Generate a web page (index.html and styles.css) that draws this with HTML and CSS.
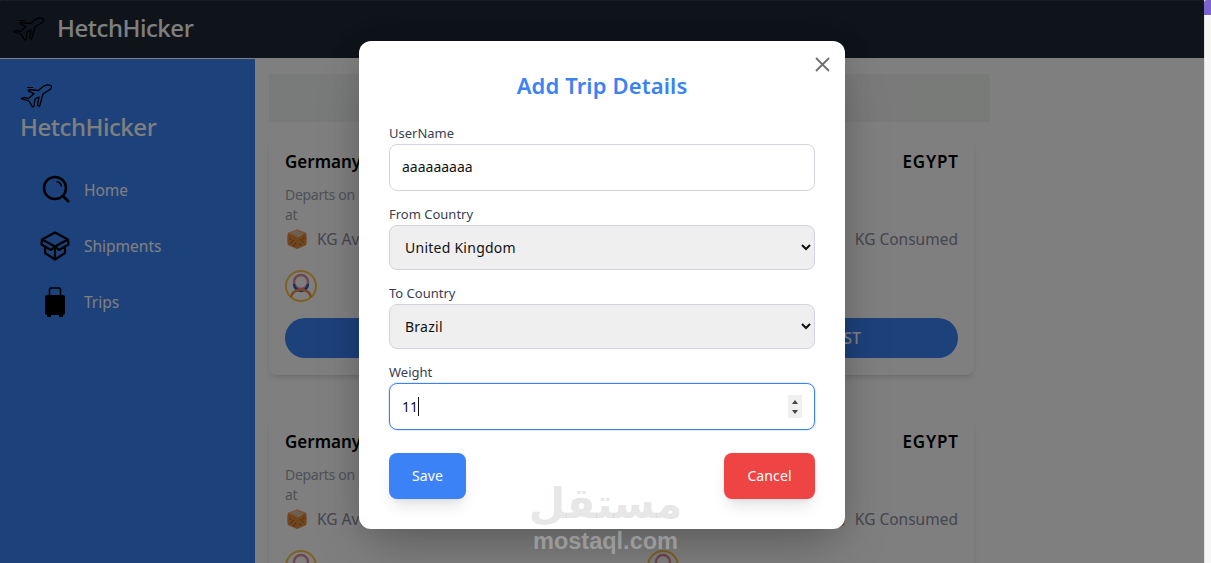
FILE: index.html
```html
<!DOCTYPE html>
<html lang="en">
<head>
    <meta charset="UTF-8">
    <meta name="viewport" content="width=device-width, initial-scale=1.0">
    <link rel="stylesheet" href="styles.css">
    <title>HetchHicker</title>
</head>
<body>
    <svg class="icon-defs" width="0" height="0">
        <defs>
            <symbol id="plane" viewBox="0 0 33 25">
                <path d="M31 2.500C28.500 1.500 25 2.300 22.500 4L18.500 7.500L9.500 6.500L8 7.700L14 10.800L8.500 15.500L4 14.500L1.500 15.700L9 18L12.500 23.800L14 23.500L15 16L19 14L17.500 22L19.500 23.500L23 11L30 6.500C31.500 5.300 32 3.300 31 2.500Z" fill="none" stroke="#000" stroke-width="1.300" stroke-linejoin="round"/>
                <path d="M7 4.500H13" fill="none" stroke="#000" stroke-width="1"/>
            </symbol>
            <symbol id="box" viewBox="0 0 24 24">
                <path d="M12 1.500L22 5.500C23 12 22.500 16 22 18.500L12 23L2 18.500C1.500 16 1 12 2 5.500Z" fill="#e08a3c"/>
                <path d="M12 1.500L22 5.500L12 10L2 5.500Z" fill="#f0b070"/>
                <path d="M9.500 2.500L17 6V8.500L12 10.500V8.500L5 4.500Z" fill="#d8c0a0"/>
                <path d="M4 12h1M7 14h1M5 16h1M10 17h1M8 19h1M15 18h1M18 15h1M16 13h1M19 11h1" stroke="#402010" stroke-width="1"/>
            </symbol>
            <symbol id="avatar" viewBox="0 0 32 32">
                <circle cx="16" cy="16" r="15" fill="#fff" stroke="#ffc040" stroke-width="2"/>
                <circle cx="16" cy="12" r="7" fill="none" stroke="#e08aa0" stroke-width="2.500"/>
                <path d="M9 14a7 7 0 0 0 14 0" fill="none" stroke="#3060c0" stroke-width="2.500"/>
                <path d="M6 27C7 22 11 20 16 19.500C21 20 25 22 26 27" fill="none" stroke="#f0904a" stroke-width="2.500"/>
            </symbol>
        </defs>
    </svg>

    <div class="page">
        <header class="topbar">
            <svg class="plane" width="33" height="25"><use href="#plane"/></svg>
            <span class="brand">HetchHicker</span>
        </header>

        <div class="layout">
            <aside class="sidebar">
                <svg class="plane" width="33" height="25"><use href="#plane"/></svg>
                <div class="brand">HetchHicker</div>
                <nav class="nav">
                    <a class="nav-item">
                        <svg class="nav-icon" viewBox="0 0 30 30">
                            <circle cx="15" cy="13" r="11" fill="none" stroke="#000" stroke-width="2.500"/>
                            <path d="M16.500 6.500A6 6 0 0 1 21.500 11.500" fill="none" stroke="#000" stroke-width="1.500"/>
                            <path d="M23.500 21.500L29 27" fill="none" stroke="#000" stroke-width="2.500"/>
                        </svg>
                        Home
                    </a>
                    <a class="nav-item">
                        <svg class="nav-icon" viewBox="0 0 30 30">
                            <path d="M15 1.500L28 8.500L15 15.500L2 8.500Z" fill="none" stroke="#000" stroke-width="2.200" stroke-linejoin="round"/>
                            <path d="M2 8.500L1.500 13.500L5 15.500V22L15 28.500L25 22V15.500L28.500 13.500L28 8.500M15 15.500V28.500M5 15.500L11 19L15 15.500L19 19L25 15.500" fill="none" stroke="#000" stroke-width="2.200" stroke-linejoin="round"/>
                        </svg>
                        Shipments
                    </a>
                    <a class="nav-item">
                        <svg class="nav-icon" viewBox="0 0 30 30">
                            <rect x="9.500" y="1" width="11" height="9" rx="1.500" fill="none" stroke="#000" stroke-width="1.500"/>
                            <rect x="5" y="8" width="20" height="20" rx="2" fill="#000"/>
                            <rect x="7" y="27" width="4" height="3" fill="#000"/>
                            <rect x="19" y="27" width="4" height="3" fill="#000"/>
                        </svg>
                        Trips
                    </a>
                </nav>
            </aside>

            <main class="content">
                <div class="hero"></div>

                <div class="card">
                    <div class="route">
                        <span>Germany</span>
                        <span class="route-to">EGYPT</span>
                    </div>
                    <p class="departs">Departs on 12 Feb 2024<br>at</p>
                    <div class="stats">
                        <div class="stat"><svg class="stat-icon"><use href="#box"/></svg>KG Available</div>
                        <div class="stat"><svg class="stat-icon"><use href="#box"/></svg>KG Price</div>
                        <div class="stat"><svg class="stat-icon"><use href="#box"/></svg>KG Total</div>
                        <div class="stat"><svg class="stat-icon"><use href="#box"/></svg>KG Consumed</div>
                    </div>
                    <div class="people">
                        <svg class="avatar"><use href="#avatar"/></svg>
                        <svg class="avatar"><use href="#avatar"/></svg>
                    </div>
                    <button class="request">SEND REQUEST</button>
                </div>

                <div class="card">
                    <div class="route">
                        <span>Germany</span>
                        <span class="route-to">EGYPT</span>
                    </div>
                    <p class="departs">Departs on 12 Feb 2024<br>at</p>
                    <div class="stats">
                        <div class="stat"><svg class="stat-icon"><use href="#box"/></svg>KG Available</div>
                        <div class="stat"><svg class="stat-icon"><use href="#box"/></svg>KG Price</div>
                        <div class="stat"><svg class="stat-icon"><use href="#box"/></svg>KG Total</div>
                        <div class="stat"><svg class="stat-icon"><use href="#box"/></svg>KG Consumed</div>
                    </div>
                    <div class="people">
                        <svg class="avatar"><use href="#avatar"/></svg>
                        <svg class="avatar"><use href="#avatar"/></svg>
                    </div>
                </div>
            </main>
        </div>

        <div class="overlay">
            <form class="modal">
                <button type="button" class="close-button" aria-label="Close">
                    <svg width="15" height="15" viewBox="0 0 15 15">
                        <path d="M1 1L14 14M14 1L1 14" stroke="#707070" stroke-width="1.800" fill="none"/>
                    </svg>
                </button>
                <h2 class="modal-title">Add Trip Details</h2>

                <label class="field-label" for="username">UserName</label>
                <input class="field field-text" id="username" type="text" value="aaaaaaaaa">

                <label class="field-label" for="from">From Country</label>
                <select class="field field-select" id="from">
                    <option>United Kingdom</option>
                </select>

                <label class="field-label" for="to">To Country</label>
                <select class="field field-select" id="to">
                    <option>Brazil</option>
                </select>

                <label class="field-label" for="weight">Weight</label>
                <div class="weight-box">
                    <input class="field field-active" id="weight" type="number" value="11">
                    <span class="caret"></span>
                    <span class="spin">
                        <span class="spin-up"></span>
                        <span class="spin-down"></span>
                    </span>
                </div>

                <div class="modal-actions">
                    <button type="button" class="btn btn-save">Save</button>
                    <button type="button" class="btn btn-cancel">Cancel</button>
                </div>
            </form>
        </div>

        <div class="watermark">
            <span class="watermark-ar" dir="rtl" lang="ar">مستقل</span>
            <span class="watermark-en">mostaql.com</span>
        </div>
    </div>

    <div class="scrollbar"><div class="scrollbar-thumb"></div></div>
</body>
</html>
```

FILE: styles.css
```css
html, body {
    height: 100%;
}

body {
    font-family: 'Noto Sans', 'DejaVu Sans', sans-serif;
    margin: 0;
    display: flex;
    overflow: hidden;
    background-color: #fff;
}

.icon-defs {
    position: absolute;
}

.page {
    position: relative;
    width: 1204px;
    height: 563px;
    overflow: hidden;
    display: flex;
    flex-direction: column;
    background-color: #fff;
}

.topbar {
    height: 58px;
    box-sizing: border-box;
    flex-shrink: 0;
    display: flex;
    align-items: center;
    gap: 12px;
    padding: 0 0 3px 12px;
    background-color: #1f2937;
    border-top: 1px dotted #3a4656;
    color: #fff;
}

.brand {
    font-size: 24px;
    font-weight: 500;
    line-height: 32px;
    letter-spacing: -0.45px;
    color: #fff;
}

.layout {
    flex: 1;
    display: flex;
    min-height: 0;
    border-top: 1px solid #fff;
}

.sidebar {
    width: 255px;
    flex-shrink: 0;
    box-sizing: border-box;
    padding: 24px 0 0 20px;
    background-color: #3b82f6;
    color: #fff;
}

.sidebar .plane {
    display: block;
}

.sidebar .brand {
    margin-top: 3px;
}

.nav {
    display: flex;
    flex-direction: column;
    gap: 26px;
    margin-top: 32px;
    padding-left: 20px;
}

.nav-item {
    display: flex;
    align-items: center;
    gap: 14px;
    height: 30px;
    font-size: 15.5px;
    color: #fff;
}

.nav-icon {
    width: 30px;
    height: 30px;
}

.content {
    flex: 1;
    padding: 15px 14px;
    min-width: 0;
    overflow: hidden;
}

.hero {
    width: 721px;
    height: 48px;
    background: linear-gradient(90deg, #f3f6f4, #f1f4f2 60%, #f3f6f3);
}

.card {
    width: 705px;
    height: 238px;
    box-sizing: border-box;
    margin: 15px 0 42px;
    padding: 13px 16px 17px;
    border-radius: 8px;
    background-color: #fff;
    box-shadow: 0 4px 6px -1px rgba(0, 0, 0, 0.1), 0 2px 4px -2px rgba(0, 0, 0, 0.1);
}

.route {
    display: flex;
    justify-content: space-between;
    font-size: 17px;
    font-weight: 600;
    line-height: 24px;
    color: #000;
}

.route-to {
    letter-spacing: 0.8px;
    margin-right: -0.8px;
}

.departs {
    margin: 11px 0 0;
    font-size: 14px;
    line-height: 20px;
    letter-spacing: -0.3px;
    color: #9ca3af;
}

.stats {
    display: flex;
    justify-content: space-between;
    margin-top: 3px;
}

.stat {
    display: flex;
    align-items: center;
    gap: 9px;
    height: 22px;
    font-size: 15.500px;
    color: #8b8b9e;
}

.stat-icon {
    width: 22px;
    height: 22px;
    margin-left: 1px;
    flex-shrink: 0;
}

.people {
    display: flex;
    gap: 330px;
    margin-top: 20px;
}

.avatar {
    width: 32px;
    height: 32px;
}

.request {
    display: flex;
    justify-content: flex-end;
    align-items: center;
    width: 100%;
    height: 40px;
    margin-top: 16px;
    padding: 0 97px 0 0;
    border: 0;
    border-radius: 20px;
    background-color: #3b82f6;
    color: #fff;
    font-family: inherit;
    font-size: 16px;
    font-weight: 500;
}

.overlay {
    position: absolute;
    top: 0;
    left: 0;
    width: 100%;
    height: 100%;
    box-sizing: border-box;
    padding-top: 41px;
    display: flex;
    justify-content: center;
    align-items: flex-start;
    background-color: rgba(0, 0, 0, 0.5);
}

.modal {
    position: relative;
    width: 486px;
    box-sizing: border-box;
    padding: 29px 30px 30px;
    border-radius: 12px;
    background-color: #fff;
    box-shadow: 0 25px 50px -12px rgba(0, 0, 0, 0.25), 0 0 30px rgba(0, 0, 0, 0.1);
}

.close-button {
    position: absolute;
    top: 16px;
    right: 15px;
    width: 15px;
    height: 15px;
    padding: 0;
    border: 0;
    background: none;
    display: flex;
}

.modal-title {
    margin: 0 0 24px;
    font-size: 22px;
    font-weight: 600;
    line-height: 30px;
    letter-spacing: 0.12px;
    text-align: center;
    color: #3b82f6;
}

.field-label {
    display: block;
    height: 18px;
    margin-bottom: 2px;
    font-size: 13px;
    line-height: 18px;
    color: #374151;
}

.field {
    display: block;
    width: 100%;
    height: 47px;
    box-sizing: border-box;
    margin-bottom: 14px;
    padding: 0 12px;
    border: 1px solid #d1d5db;
    border-radius: 8px;
    background-color: #fff;
    font-family: inherit;
    font-size: 14px;
    color: #111;
    outline: none;
}

.field-text {
    padding-bottom: 2px;
}

.field-select {
    height: 45px;
    padding-left: 11px;
    letter-spacing: 0.25px;
    background-color: #efefef;
}

.weight-box {
    position: relative;
}

.field-active {
    border-color: #3b82f6;
    box-shadow: 0 0 0 1px rgba(59, 130, 246, 0.15);
    margin-bottom: 0;
    appearance: textfield;
}

.caret {
    position: absolute;
    left: 29px;
    top: 14px;
    width: 1px;
    height: 19px;
    background-color: #111;
}

.spin {
    position: absolute;
    right: 13px;
    top: 12px;
    width: 14px;
    height: 23px;
    display: flex;
    flex-direction: column;
    align-items: center;
    justify-content: center;
    gap: 6px;
    background-color: #f0f0f0;
}

.spin-up,
.spin-down {
    width: 0;
    height: 0;
    border-left: 3.500px solid transparent;
    border-right: 3.500px solid transparent;
}

.spin-up {
    border-bottom: 4px solid #444;
}

.spin-down {
    border-top: 4px solid #444;
}

.modal-actions {
    display: flex;
    justify-content: space-between;
    margin-top: 23px;
}

.btn {
    height: 46px;
    padding: 0 0 2px;
    border: 0;
    border-radius: 8px;
    color: #fff;
    font-family: inherit;
    font-size: 14px;
    letter-spacing: 0.1px;
    box-shadow: 0 10px 15px -3px rgba(0, 0, 0, 0.1), 0 4px 6px -4px rgba(0, 0, 0, 0.1);
}

.btn-save {
    width: 77px;
    background-color: #3b82f6;
}

.btn-cancel {
    width: 91px;
    background-color: #ef4444;
}

.watermark {
    position: absolute;
    left: 533px;
    top: 479px;
    width: 145px;
    display: flex;
    flex-direction: column;
    align-items: center;
    pointer-events: none;
    color: rgba(204, 204, 204, 0.49);
}

.watermark-ar {
    font-family: 'DejaVu Sans', sans-serif;
    font-size: 42px;
    font-weight: 700;
    line-height: 50px;
}

.watermark-en {
    font-family: 'Liberation Sans', sans-serif;
    font-size: 23.500px;
    font-weight: 700;
    line-height: 24px;
}

.scrollbar {
    width: 7px;
    height: 563px;
    flex-shrink: 0;
    background-color: #f6f6f6;
    border-left: 1px solid #e4e4e4;
    box-sizing: border-box;
}

.scrollbar-thumb {
    height: 15px;
    margin-left: -1px;
    width: 7px;
    border-top-left-radius: 3px;
    background-color: #7b63d0;
}
```
